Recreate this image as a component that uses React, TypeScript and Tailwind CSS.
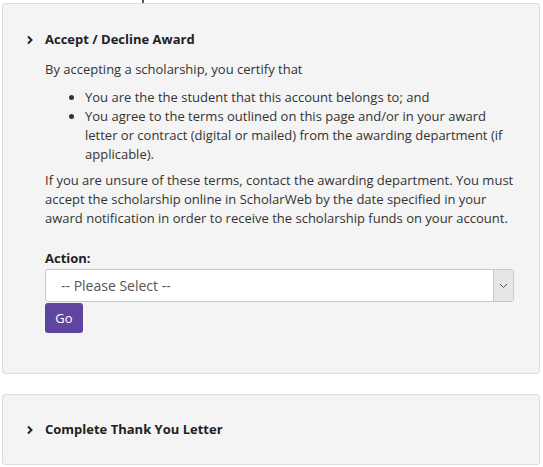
import React from "react";

const Chevron = () => (
  <svg width="8" height="10" viewBox="0 0 8 10" className="shrink-0">
    <path d="M2 1.5 L5.5 5 L2 8.5" fill="none" stroke="#222" strokeWidth="2" />
  </svg>
);

const PanelHeader = ({ title }: { title: string }) => (
  <div className="flex items-center gap-[11px] pl-[23px]">
    <Chevron />
    <h3 className="text-[13px] font-bold text-[#222]">{title}</h3>
  </div>
);

export default function App() {
  return (
    <div className="min-h-[467px] w-[543px] bg-white font-['Open_Sans',sans-serif] text-[13px] leading-[19px] text-[#333]">
      {/* descender of the line above, cut off */}
      <div className="h-[3px] pl-[142px]">
        <div className="h-[3px] w-[2px] bg-[#555]" />
      </div>

      {/* Accept / Decline panel */}
      <section className="mx-[2px] mr-[3px] h-[371px] rounded-[3px] border border-[#dcdcdc] bg-[#f4f4f4] pt-[26px]">
        <PanelHeader title="Accept / Decline Award" />
        <div className="pl-[42px] pr-[20px] pt-[11px]">
          <p>By accepting a scholarship, you certify that</p>
          <ul className="mt-[9px] list-disc pl-[40px]">
            <li>You are the the student that this account belongs to; and</li>
            <li>
              You agree to the terms outlined on this page and/or in your award letter or contract (digital or
              mailed) from the awarding department (if applicable).
            </li>
          </ul>
          <p className="mt-[7px]">
            If you are unsure of these terms, contact the awarding department. You must accept the scholarship
            online in ScholarWeb by the date specified in your award notification in order to receive the
            scholarship funds on your account.
          </p>

          <label className="mt-[21px] block font-bold text-[#222]">Action:</label>
          <div className="mt-[1px] flex h-[33px] w-[469px] overflow-hidden rounded-[3px] border border-[#c8c8c8] bg-white">
            <div className="flex flex-1 items-center pl-[15px] text-[14px] text-[#555]">-- Please Select --</div>
            <div className="flex w-[20px] items-center justify-center border-l border-[#c8c8c8] bg-[#e6e6e6]">
              <svg width="9" height="6" viewBox="0 0 9 6">
                <path d="M1 1 L4.5 4.5 L8 1" fill="none" stroke="#555" strokeWidth="1" />
              </svg>
            </div>
          </div>
          <button className="mt-px h-[30px] w-[38px] rounded-[3px] bg-[#5f45a0] text-[13px] text-white">Go</button>
        </div>
      </section>

      {/* Thank you letter panel */}
      <section className="mx-[2px] mr-[3px] mt-[20px] flex h-[71px] items-center rounded-[3px] border border-[#dcdcdc] bg-[#f4f4f4]">
        <PanelHeader title="Complete Thank You Letter" />
      </section>
    </div>
  );
}
